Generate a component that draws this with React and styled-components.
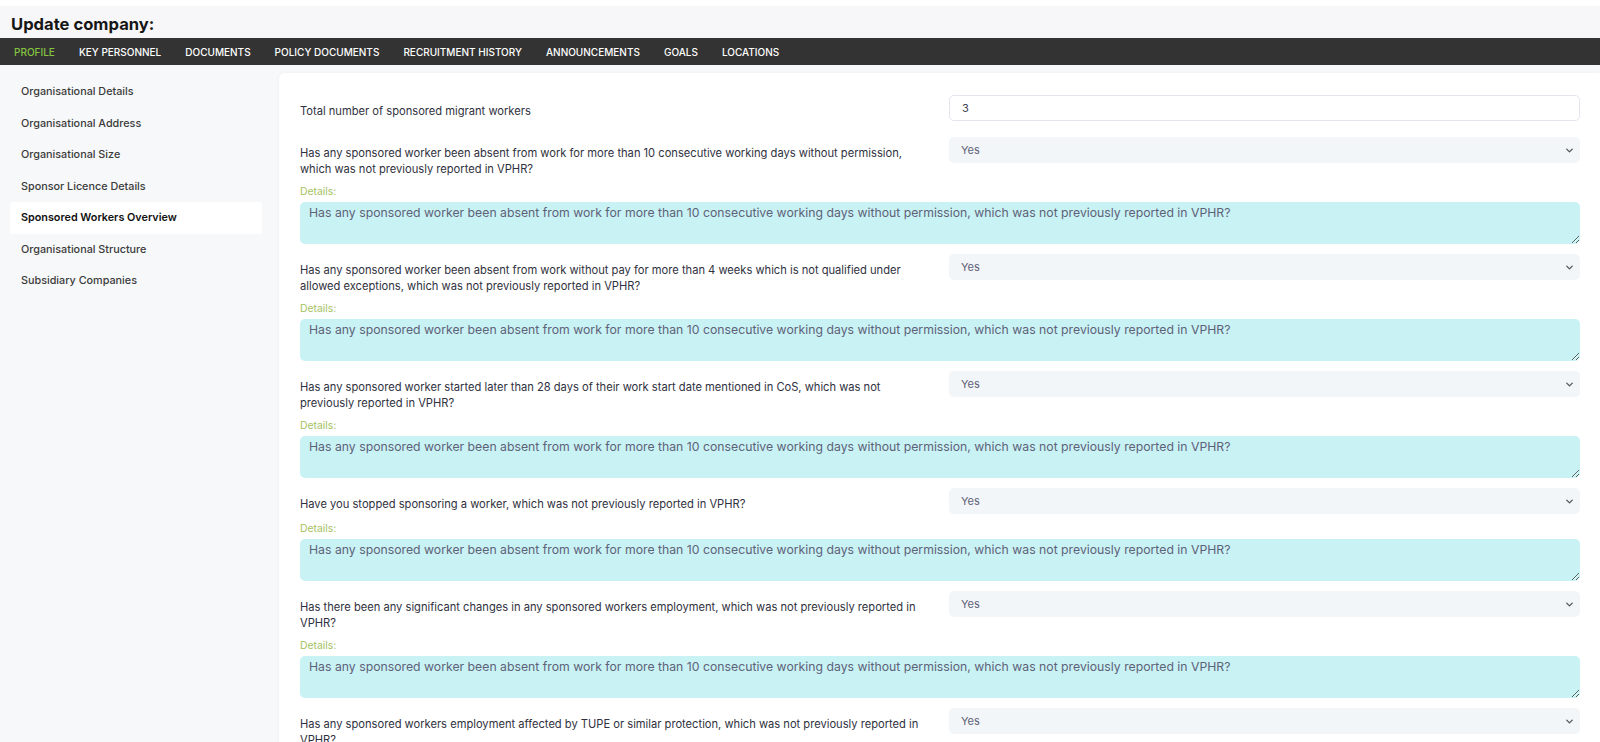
import React from 'react';
import styled, { createGlobalStyle } from 'styled-components';
import { ChevronDown } from 'lucide-react';

const GlobalStyle = createGlobalStyle`
  * {
    box-sizing: border-box;
  }
  body {
    margin: 0;
    font-family: Inter, 'Open Sans', sans-serif;
    background: #ffffff;
    color: #3f4254;
  }
`;

const Page = styled.div`
  width: 100%;
  min-height: 742px;
  padding-top: 6px;
  background: #ffffff;
`;

const Header = styled.div`
  height: 32px;
  padding: 8px 0 0 11px;
  background: #f7f7f9;
`;

const Title = styled.h1`
  margin: 0;
  font-size: 16.6px;
  line-height: 21px;
  font-weight: 700;
  color: #161616;
`;

const NavBar = styled.nav`
  display: flex;
  align-items: center;
  gap: 24px;
  height: 27px;
  padding-left: 14px;
  background: #333333;
`;

const NavItem = styled.a`
  font-size: 10px;
  font-weight: 500;
  text-transform: uppercase;
  color: ${(p) => (p.$active ? '#86c440' : '#ffffff')};
  text-decoration: none;
  cursor: pointer;
`;

const Body = styled.div`
  display: grid;
  grid-template-columns: 252px 1fr;
  column-gap: 17px;
  padding-left: 10px;
  background: #f7f8fa;
  min-height: 677px;
`;

const Sidebar = styled.ul`
  list-style: none;
  margin: 0;
  padding: 11px 0 0 0;
`;

const SideItem = styled.li`
  padding: 8px 11px;
  line-height: 15.5px;
  font-size: 10.8px;
  font-weight: ${(p) => (p.$active ? 600 : 500)};
  color: ${(p) => (p.$active ? '#111111' : '#3b3b3b')};
  background: ${(p) => (p.$active ? '#ffffff' : 'transparent')};
  border-radius: 3px;
  cursor: pointer;
`;

const Card = styled.section`
  margin-top: 8px;
  padding: 22px 20px 0 21px;
  background: #ffffff;
  border-radius: 6px 0 0 0;
  box-shadow: 0 0 5px rgba(0, 0, 0, 0.04);
`;

const FieldRow = styled.div`
  display: grid;
  grid-template-columns: 1fr 1fr;
  column-gap: 18px;
  align-items: start;
  margin-bottom: ${(p) => p.$gap || 8}px;
`;

const Question = styled.label`
  padding-top: 8px;
  font-size: 11.15px;
  line-height: 16px;
  color: #2f3140;
`;

const TextInput = styled.input`
  width: 100%;
  height: 26px;
  padding: 0 12px;
  border: 1px solid #e4e6ef;
  border-radius: 5px;
  background: #ffffff;
  font-family: inherit;
  font-size: 11px;
  color: #3f4254;
  outline: none;
`;

const SelectWrap = styled.div`
  position: relative;
  height: 26px;
`;

const Select = styled.select`
  width: 100%;
  height: 26px;
  padding: 0 30px 0 12px;
  border: none;
  border-radius: 5px;
  background: #f3f6f9;
  font-family: inherit;
  font-size: 11px;
  color: #5e6278;
  appearance: none;
  outline: none;
`;

const Chevron = styled.span`
  position: absolute;
  right: 5px;
  top: 8px;
  display: flex;
  color: #55585f;
  pointer-events: none;
`;

const DetailsLabel = styled.div`
  margin-bottom: 3px;
  font-size: 10.4px;
  line-height: 14px;
  color: #a5c262;
`;

const Details = styled.textarea`
  display: block;
  width: 100%;
  height: 42px;
  margin: 0 0 10px;
  padding: 4px 9px;
  border: none;
  border-radius: 5px;
  background: #c9f2f5;
  font-family: inherit;
  font-size: 12.25px;
  line-height: 14px;
  color: #5e6278;
  resize: vertical;
  outline: none;
`;

const tabs = [
  'Profile',
  'Key personnel',
  'Documents',
  'Policy documents',
  'Recruitment history',
  'Announcements',
  'Goals',
  'Locations'
];

const sections = [
  'Organisational Details',
  'Organisational Address',
  'Organisational Size',
  'Sponsor Licence Details',
  'Sponsored Workers Overview',
  'Organisational Structure',
  'Subsidiary Companies'
];

const detailText =
  'Has any sponsored worker been absent from work for more than 10 consecutive working days without permission, which was not previously reported in VPHR?';

const questions = [
  'Has any sponsored worker been absent from work for more than 10 consecutive working days without permission, which was not previously reported in VPHR?',
  'Has any sponsored worker been absent from work without pay for more than 4 weeks which is not qualified under allowed exceptions, which was not previously reported in VPHR?',
  'Has any sponsored worker started later than 28 days of their work start date mentioned in CoS, which was not previously reported in VPHR?',
  'Have you stopped sponsoring a worker, which was not previously reported in VPHR?',
  'Has there been any significant changes in any sponsored workers employment, which was not previously reported in VPHR?',
  'Has any sponsored workers employment affected by TUPE or similar protection, which was not previously reported in VPHR?'
];

const YesNo = () => (
  <SelectWrap>
    <Select defaultValue="yes">
      <option value="yes">Yes</option>
      <option value="no">No</option>
    </Select>
    <Chevron>
      <ChevronDown size={11} strokeWidth={3} />
    </Chevron>
  </SelectWrap>
);

const App = () => {
  return (
    <Page>
      <GlobalStyle />
      <Header>
        <Title>Update company:</Title>
      </Header>
      <NavBar>
        {tabs.map((tab, i) => (
          <NavItem key={tab} $active={i === 0}>
            {tab}
          </NavItem>
        ))}
      </NavBar>
      <Body>
        <Sidebar>
          {sections.map((s, i) => (
            <SideItem key={s} $active={i === 4}>
              {s}
            </SideItem>
          ))}
        </Sidebar>
        <Card>
          <FieldRow $gap={16}>
            <Question>Total number of sponsored migrant workers</Question>
            <TextInput type="text" defaultValue="3" />
          </FieldRow>
          {questions.map((q) => (
            <div key={q}>
              <FieldRow>
                <Question>{q}</Question>
                <YesNo />
              </FieldRow>
              <DetailsLabel>Details:</DetailsLabel>
              <Details defaultValue={detailText} />
            </div>
          ))}
        </Card>
      </Body>
    </Page>
  );
};

export default App;
